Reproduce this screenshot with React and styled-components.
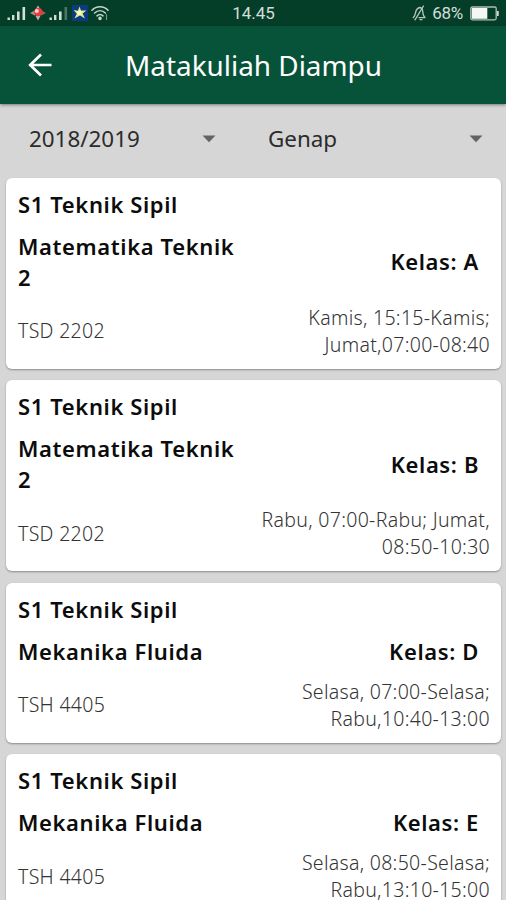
import React from 'react'
import styled, { createGlobalStyle } from 'styled-components'

const courses = [
  { id: 1, program: 'S1 Teknik Sipil', name: 'Matematika Teknik 2', code: 'TSD 2202', group: 'A', schedule: 'Kamis, 15:15-Kamis;\nJumat,07:00-08:40' },
  { id: 2, program: 'S1 Teknik Sipil', name: 'Matematika Teknik 2', code: 'TSD 2202', group: 'B', schedule: 'Rabu, 07:00-Rabu; Jumat,\n08:50-10:30' },
  { id: 3, program: 'S1 Teknik Sipil', name: 'Mekanika Fluida', code: 'TSH 4405', group: 'D', schedule: 'Selasa, 07:00-Selasa;\nRabu,10:40-13:00' },
  { id: 4, program: 'S1 Teknik Sipil', name: 'Mekanika Fluida', code: 'TSH 4405', group: 'E', schedule: 'Selasa, 08:50-Selasa;\nRabu,13:10-15:00' },
]

export default () => (
  <Screen>
    <GlobalStyle />
    <StatusBar>
      <StatusIcons>
        <Signal />
        <RedCarrier />
        <Signal weak />
        <BlueCarrier />
        <Wifi />
      </StatusIcons>
      <Clock>14.45</Clock>
      <StatusRight>
        <BellOff />
        <Percent>68%</Percent>
        <Battery />
      </StatusRight>
    </StatusBar>
    <AppBar>
      <BackButton aria-label='Kembali'><BackArrow /></BackButton>
      <Title>Matakuliah Diampu</Title>
    </AppBar>
    <Filters>
      <Select $width='187px'>2018/2019<Caret /></Select>
      <Select $width='215px'>Genap<Caret /></Select>
    </Filters>
    <List>
      {courses.map(course => <Course key={course.id} {...course} />)}
    </List>
  </Screen>
)

const Course = ({ program, name, code, group, schedule }) => (
  <Card>
    <Heading>{program}</Heading>
    <Row>
      <Name>{name}</Name>
      <Group>Kelas: {group}</Group>
    </Row>
    <Row>
      <Code>{code}</Code>
      <Schedule>{schedule}</Schedule>
    </Row>
  </Card>
)

const Signal = ({ weak }) => (
  <svg width='20' height='16' viewBox='0 0 20 16' fill='#d3ded8'>
    <rect x='0.5' y='12.5' width='2.4' height='2.5' />
    <rect x='5' y='10' width='2.4' height='5' />
    <rect x='10' y='6.5' width='2.6' height='8.5' />
    <rect x='15.5' y='2' width='2.6' height='13' opacity={weak ? 0.35 : 1} />
  </svg>
)

const RedCarrier = () => (
  <svg width='16' height='16' viewBox='0 0 16 16'>
    <path d='M8 0.5 10.4 4.5 8 8 5.6 4.5Z' fill='#e8b9b4' />
    <path d='M0 8 4.5 5.4 8 8 4.5 10.6Z' fill='#b98782' />
    <path d='M8 15.5 5.6 11 8 8 10.4 11Z' fill='#c9b3ae' />
    <path d='M16 8 11.5 5.4 8 8 11.5 10.6Z' fill='#a35a55' />
    <circle cx='8.3' cy='7' r='4.2' fill='#e43f40' />
    <circle cx='6.8' cy='6' r='2' fill='#ffd9d6' />
  </svg>
)

const BlueCarrier = () => (
  <svg width='16' height='16' viewBox='0 0 16 16'>
    <rect width='16' height='16' rx='1' fill='#0c3b86' />
    <path d='M7.5 1.5 9 5.4 14.4 5.4 10.6 8.4 13 13.4 8 10.6 2.4 13.4 4.8 8.8 1.5 5 6 5.8Z' fill='#dff07a' />
    <circle cx='7.3' cy='7.8' r='2.3' fill='#f8fbe2' />
  </svg>
)

const Wifi = () => (
  <svg width='18' height='16' viewBox='0 0 18 16' fill='none' stroke='#c7d6cd' strokeWidth='1.6' strokeLinecap='round'>
    <path d='M1 5.2C5.5 0.6 12.5 0.6 17 5.2' />
    <path d='M3.6 8C6.8 4.9 11.2 4.9 14.4 8' />
    <path d='M6 10.8C7.8 9.2 10.2 9.2 12 10.8' />
    <circle cx='9' cy='13.4' r='1' fill='#c7d6cd' />
    <path d='M15.5 9.5v5' strokeWidth='1.1' opacity='.6' />
  </svg>
)

const BellOff = () => (
  <svg width='14' height='16' viewBox='0 0 14 16' fill='none' stroke='#b5c7bc' strokeWidth='1.3' strokeLinecap='round' strokeLinejoin='round'>
    <path d='M1.3 12.6C3 11.4 3.2 9.5 3.7 7 4.3 4.2 5.5 3 8 2.5 10.2 3 10.7 4.5 10.8 7 11 9.5 11.4 11.4 13 12.6H7' />
    <path d='M11.5 1 3 14.8M8 14.6h2' />
  </svg>
)

const Battery = () => (
  <svg width='30' height='15' viewBox='0 0 30 15'>
    <rect x='0.8' y='1' width='25.4' height='12.8' rx='1.5' fill='none' stroke='#aebfb5' strokeWidth='1.3' />
    <rect x='1.8' y='2' width='15.5' height='10.8' fill='#f4f7f5' />
    <path d='M27.8 5v5' stroke='#d5ded9' strokeWidth='1.8' />
  </svg>
)

const BackArrow = () => (
  <svg width='24' height='24' viewBox='0 0 24 24' fill='none' stroke='#fff' strokeWidth='2.7'>
    <path d='M23.5 12H2M13 1.5 2.2 12 13 22.5' />
  </svg>
)

const Caret = () => (
  <svg width='14' height='8' viewBox='0 0 14 8' fill='#636363'>
    <path d='M0.5 0.5h13L7 7.3Z' />
  </svg>
)

const GlobalStyle = createGlobalStyle`
  body {
    margin: 0;
    background: #d6d6d6;
  }
`

const Screen = styled.div`
  display: flex;
  flex-direction: column;
  width: 506px;
  height: 900px;
  overflow: hidden;
  background: #d6d6d6;
  color: #0c0c0c;
  font-family: 'Noto Sans', 'Open Sans', sans-serif;
`

const StatusBar = styled.header`
  display: grid;
  grid-template-columns: 1fr auto 1fr;
  align-items: center;
  flex: none;
  height: 26px;
  padding: 0 6px 0 7px;
  background: #043e29;
  color: #d3ded8;
  font-family: Roboto, sans-serif;
  font-size: 17px;
`
const StatusIcons = styled.div`
  display: flex;
  align-items: center;
  gap: 3px;
`
const Clock = styled.div`
  line-height: 26px;
`
const StatusRight = styled.div`
  display: flex;
  align-items: center;
  justify-content: flex-end;
`
const Percent = styled.span`
  margin: 0 7px 0 6px;
  letter-spacing: -0.3px;
`

const AppBar = styled.div`
  display: flex;
  align-items: center;
  flex: none;
  height: 78px;
  background: #07533a;
  box-shadow: 0 1px 3px rgba(0, 0, 0, 0.45);
  color: #fff;
`
const BackButton = styled.button`
  display: flex;
  margin: 0 0 0 28px;
  padding: 0;
  border: 0;
  background: none;
`
const Title = styled.h1`
  margin: 0 0 0 73px;
  font-size: 27.9px;
  font-weight: 400;
  line-height: 36px;
  white-space: nowrap;
`

const Filters = styled.div`
  display: flex;
  gap: 52px;
  flex: none;
  height: 74px;
  padding: 0 0 0 29px;
`
const Select = styled.div`
  display: flex;
  align-items: center;
  justify-content: space-between;
  width: ${props => props.$width};
  height: 69px;
  color: #2b2b2b;
  font-size: 22.4px;
`

const List = styled.main`
  display: flex;
  flex-direction: column;
  gap: 11.4px;
  padding: 0 5px 0 6px;
`
const Card = styled.article`
  display: flex;
  flex-direction: column;
  gap: 11px;
  flex: none;
  padding: 10.9px 11px 11.1px 12px;
  border-radius: 6px;
  background: #fff;
  box-shadow: 0 1px 2px rgba(0, 0, 0, 0.35);
`
const Row = styled.div`
  display: flex;
  align-items: center;
  justify-content: space-between;
`
const Heading = styled.h2`
  margin: 0;
  font-size: 22px;
  font-weight: 600;
  line-height: 31px;
  letter-spacing: 0.62px;
`
const Name = styled(Heading)`
  width: 228px;
`
const Group = styled(Heading)`
  margin-right: 11px;
`
const Code = styled.div`
  color: #333;
  font-size: 19.5px;
  font-weight: 300;
  line-height: 27px;
  letter-spacing: 0.3px;
`
const Schedule = styled(Code)`
  text-align: right;
  white-space: pre-line;
`
